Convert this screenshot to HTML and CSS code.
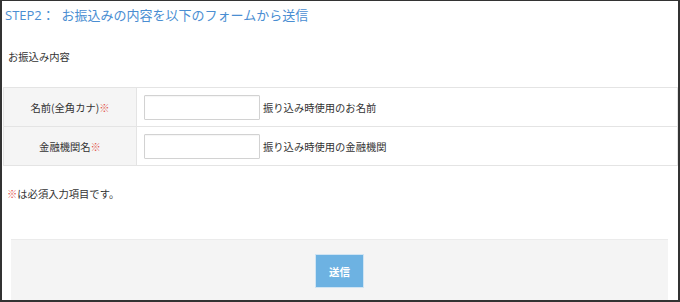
FILE: index.html
```html
<!DOCTYPE html>
<html lang="ja">
<head>
<meta charset="UTF-8">
<meta name="viewport" content="width=device-width, initial-scale=1.0">
<title>お振込み内容</title>
<link rel="stylesheet" href="styles.css">
</head>
<body>
<div class="frame">
  <h2 class="step-title">STEP2：&nbsp;&nbsp;お振込みの内容を以下のフォームから送信</h2>
  <p class="section-label">お振込み内容</p>

  <form class="transfer-form" onsubmit="return false;">
    <table class="form-table">
      <tr>
        <th>名前(全角カナ)<span class="req">※</span></th>
        <td><input type="text" class="text-input"><span class="hint">振り込み時使用のお名前</span></td>
      </tr>
      <tr>
        <th>金融機関名<span class="req">※</span></th>
        <td><input type="text" class="text-input"><span class="hint">振り込み時使用の金融機関</span></td>
      </tr>
    </table>

    <p class="note"><span class="req">※</span>は必須入力項目です。</p>

    <div class="submit-area">
      <button type="submit" class="submit-btn">送信</button>
    </div>
  </form>
</div>
</body>
</html>
```

FILE: styles.css
```css
* {
  box-sizing: border-box;
}

html, body {
  margin: 0;
  padding: 0;
  background: #fff;
}

body {
  font-family: "Noto Sans CJK JP", "Noto Sans", sans-serif;
  color: #333;
  font-size: 10.3px;
}

.frame {
  width: 680px;
  height: 302px;
  border-top: 1px solid #333;
  border-left: 2px solid #333;
  border-right: 2px solid #333;
  border-bottom: 2px solid #333;
  overflow: hidden;
}

.step-title {
  margin: 4px 0 0 3px;
  font-size: 13px;
  line-height: 20px;
  font-weight: normal;
  color: #4a8ed2;
  font-family: "Open Sans", "Noto Sans CJK JP", sans-serif;
}

.section-label {
  margin: 24px 0 0 6px;
  line-height: 16px;
}

.form-table {
  margin: 22px 0 0 1px;
  width: 675px;
  border-collapse: collapse;
}

.form-table th,
.form-table td {
  border: 1px solid #e4e4e4;
  padding: 6px 7px;
  height: 39px;
}

.form-table th {
  width: 133px;
  background: #f5f5f5;
  font-weight: normal;
  text-align: center;
}

.form-table td {
  white-space: nowrap;
}

.text-input {
  width: 116px;
  height: 25px;
  border: 1px solid #d2d2d2;
  border-radius: 1px;
  box-shadow: inset 0 1px 1px rgba(0, 0, 0, 0.04);
  vertical-align: middle;
  margin: 0;
}

.hint {
  margin-left: 3px;
  vertical-align: middle;
}

.req {
  color: #e2554c;
}

.note {
  margin: 20px 0 0 5px;
  line-height: 16px;
}

.submit-area {
  margin: 37px 0 0 9px;
  width: 657px;
  height: 70px;
  background: #f4f4f4;
  border-top: 1px solid #ebebeb;
  display: flex;
  justify-content: center;
  padding-top: 14px;
}

.submit-btn {
  width: 49px;
  height: 34px;
  background: #6db2e2;
  border: 1px solid #cfe4f3;
  color: #fff;
  font-weight: bold;
  font-size: 10.5px;
  font-family: "Noto Sans CJK JP", sans-serif;
  padding: 0;
  cursor: pointer;
}
```
